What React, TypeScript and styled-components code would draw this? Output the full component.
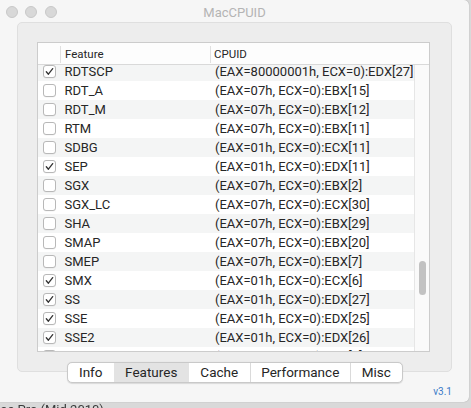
import React from "react";
import styled, { createGlobalStyle } from "styled-components";

const Global = createGlobalStyle`
  html, body { margin: 0; padding: 0; }
  body {
    background: #d9d9d9;
    font-family: "Roboto", "Liberation Sans", sans-serif;
    -webkit-font-smoothing: antialiased;
  }
`;

const Desktop = styled.div`
  width: 471px;
  height: 408px;
  overflow: hidden;
  display: flex;
  flex-direction: column;
`;

const Window = styled.div`
  box-sizing: border-box;
  width: 469px;
  height: 402px;
  flex: none;
  background: #f6f6f6;
  border-radius: 0 5px 5px 0;
  box-shadow: 0 0 1px rgba(0, 0, 0, 0.35);
  padding: 0 17px;
  display: flex;
  flex-direction: column;
`;

const TitleBar = styled.div`
  height: 22px;
  margin: 0 -17px;
  display: grid;
  grid-template-columns: 1fr auto 1fr;
  align-items: center;
`;

const Lights = styled.div`
  display: flex;
  gap: 7.5px;
  padding-left: 5.5px;
  padding-top: 1px;
`;

const Light = styled.span`
  width: 12px;
  height: 12px;
  box-sizing: border-box;
  border-radius: 50%;
  background: #d8d8d8;
  border: 0.5px solid #c8c8c8;
`;

const Title = styled.div`
  font-size: 13px;
  color: #b4b4b4;
  padding-top: 2px;
`;

const Panel = styled.div`
  box-sizing: border-box;
  width: 435px;
  height: 350px;
  background: #ededed;
  border: 1px solid #dfdfdf;
  border-radius: 5px;
  padding: 19px 21px 19px 19px;
`;

const Table = styled.div`
  box-sizing: border-box;
  width: 393px;
  height: 310px;
  border: 1px solid #cccccc;
  background: #ffffff;
  display: flex;
  flex-direction: column;
`;

const Header = styled.div`
  height: 21px;
  flex: none;
  display: flex;
  align-items: stretch;
  border-bottom: 1px solid #d9d9d9;
  background: #fdfdfd;
  position: relative;
  z-index: 1;
`;

const HeadCell = styled.div<{ $w?: number }>`
  ${(p) => (p.$w ? `width: ${p.$w}px; flex: none;` : "flex: 1;")}
  box-sizing: border-box;
  padding-left: ${(p) => (p.$w === 149 ? 4 : 3)}px;
  font-size: 11.5px;
  color: #262626;
  display: flex;
  align-items: center;
  padding-top: 1px;
`;

const Divider = styled.div`
  width: 1px;
  flex: none;
  margin: 3px 0 1px;
  background: #e0e0e0;
`;

const Body = styled.div`
  flex: 1;
  display: flex;
  min-height: 0;
`;

const Viewport = styled.div`
  flex: 1;
  overflow: hidden;
`;

const List = styled.div`
  margin-top: -3px;
`;

const Row = styled.div<{ $stripe: boolean }>`
  height: 19px;
  display: flex;
  align-items: center;
  background: ${(p) => (p.$stripe ? "#f4f5f5" : "#ffffff")};
  font-size: 13px;
  color: #262626;
`;

const CheckCell = styled.div`
  width: 23px;
  flex: none;
  box-sizing: border-box;
  padding-left: 4.5px;
  display: flex;
  align-items: center;
`;

const Box = styled.span`
  box-sizing: border-box;
  width: 13px;
  height: 13px;
  border: 1px solid #b8b8b8;
  border-radius: 3px;
  background: #ffffff;
  box-shadow: 0 0.5px 0.5px rgba(0, 0, 0, 0.06);
  display: flex;
  align-items: center;
  justify-content: center;
`;

const FeatureCell = styled.div`
  width: 150px;
  flex: none;
  box-sizing: border-box;
  padding-left: 3.5px;
  white-space: nowrap;
`;

const CpuidCell = styled.div`
  flex: 1;
  padding-left: 4px;
  white-space: nowrap;
  overflow: hidden;
`;

const Track = styled.div`
  width: 15px;
  flex: none;
  box-sizing: border-box;
  background: #fafafa;
  border-left: 1px solid #e6e6e6;
  padding-top: 196px;
  display: flex;
  justify-content: center;
`;

const Thumb = styled.div`
  width: 7.5px;
  height: 34px;
  border-radius: 4px;
  background: #c2c2c2;
  margin-left: 1px;
`;

const TabRow = styled.div`
  margin-top: -10px;
  width: 435px;
  display: flex;
  justify-content: center;
`;

const Tabs = styled.div`
  display: flex;
  height: 19px;
  box-sizing: content-box;
  background: #ffffff;
  border: 1px solid #c9c9c9;
  border-radius: 5px;
  box-shadow: 0 0.5px 1px rgba(0, 0, 0, 0.12);
  overflow: hidden;
  margin-left: 0.5px;
`;

const Tab = styled.div<{ $w: number; $active?: boolean; $sep?: boolean }>`
  width: ${(p) => p.$w}px;
  box-sizing: border-box;
  display: flex;
  align-items: center;
  justify-content: center;
  font-size: 13.5px;
  line-height: 16px;
  padding-bottom: 1px;
  color: #262626;
  background: ${(p) => (p.$active ? "#e3e3e3" : "transparent")};
  border-left: ${(p) => (p.$sep ? "1px solid #dadada" : "none")};
`;

const Footer = styled.div`
  width: 435px;
  display: flex;
  justify-content: flex-end;
  margin-top: 3px;
`;

const Version = styled.span`
  font-size: 10px;
  line-height: 12px;
  color: #3a7bc8;
`;

const Caption = styled.div`
  height: 6px;
  overflow: hidden;
  font-size: 13px;
  line-height: 13px;
  padding-top: 1px;
  color: #3a3a3a;
  white-space: nowrap;
  margin-left: -11px;
  filter: blur(0.3px);
`;

const Check = () => (
  <svg width="11" height="11" viewBox="0 0 11 11">
    <path
      d="M2.3 5.8 L4.4 8.2 L8.7 2.6"
      fill="none"
      stroke="#333"
      strokeWidth="1.3"
      strokeLinecap="round"
      strokeLinejoin="round"
    />
  </svg>
);

const rows: [string, string, boolean][] = [
  ["RDTSCP", "(EAX=80000001h, ECX=0):EDX[27]", true],
  ["RDT_A", "(EAX=07h, ECX=0):EBX[15]", false],
  ["RDT_M", "(EAX=07h, ECX=0):EBX[12]", false],
  ["RTM", "(EAX=07h, ECX=0):EBX[11]", false],
  ["SDBG", "(EAX=01h, ECX=0):ECX[11]", false],
  ["SEP", "(EAX=01h, ECX=0):EDX[11]", true],
  ["SGX", "(EAX=07h, ECX=0):EBX[2]", false],
  ["SGX_LC", "(EAX=07h, ECX=0):ECX[30]", false],
  ["SHA", "(EAX=07h, ECX=0):EBX[29]", false],
  ["SMAP", "(EAX=07h, ECX=0):EBX[20]", false],
  ["SMEP", "(EAX=07h, ECX=0):EBX[7]", false],
  ["SMX", "(EAX=01h, ECX=0):ECX[6]", true],
  ["SS", "(EAX=01h, ECX=0):EDX[27]", true],
  ["SSE", "(EAX=01h, ECX=0):EDX[25]", true],
  ["SSE2", "(EAX=01h, ECX=0):EDX[26]", true],
  ["SSE3", "(EAX=01h, ECX=0):ECX[0]", true],
];

const tabs: [string, number][] = [
  ["Info", 46],
  ["Features", 75],
  ["Cache", 61],
  ["Performance", 100],
  ["Misc", 52],
];

export default function App() {
  return (
    <>
      <Global />
      <Desktop>
        <Window>
          <TitleBar>
            <Lights>
              <Light />
              <Light />
              <Light />
            </Lights>
            <Title>MacCPUID</Title>
            <div />
          </TitleBar>
          <Panel>
            <Table>
              <Header>
                <HeadCell $w={22} />
                <Divider />
                <HeadCell $w={149}>Feature</HeadCell>
                <Divider />
                <HeadCell>CPUID</HeadCell>
              </Header>
              <Body>
                <Viewport>
                  <List>
                    {rows.map(([name, cpuid, on], i) => (
                      <Row key={name} $stripe={i % 2 === 0}>
                        <CheckCell>
                          <Box>{on && <Check />}</Box>
                        </CheckCell>
                        <FeatureCell>{name}</FeatureCell>
                        <CpuidCell>{cpuid}</CpuidCell>
                      </Row>
                    ))}
                  </List>
                </Viewport>
                <Track>
                  <Thumb />
                </Track>
              </Body>
            </Table>
          </Panel>
          <TabRow>
            <Tabs>
              {tabs.map(([t, w], i) => (
                <Tab key={t} $w={w} $active={t === "Features"} $sep={i >= 3}>
                  {t}
                </Tab>
              ))}
            </Tabs>
          </TabRow>
          <Footer>
            <Version>v3.1</Version>
          </Footer>
        </Window>
        <Caption>Mac Pro (Mid 2010)</Caption>
      </Desktop>
    </>
  );
}
